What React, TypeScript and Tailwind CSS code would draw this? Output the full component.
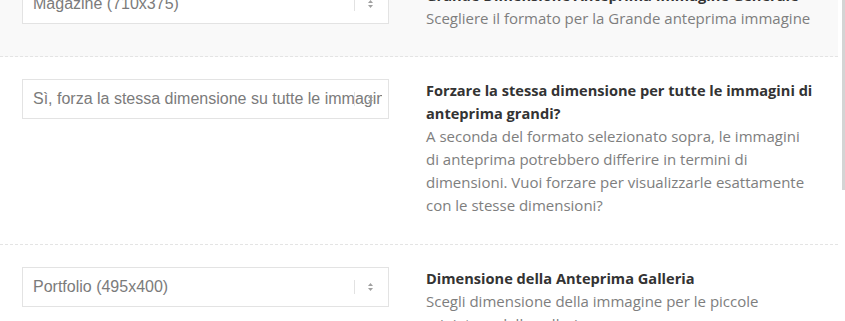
import React from "react";

type Row = {
  value: string;
  title: string[];
  desc: string[];
  shaded?: boolean;
};

const rows: Row[] = [
  {
    value: "Magazine (710x375)",
    title: ["Grande Dimensione Anteprima Immagine Generale"],
    desc: ["Scegliere il formato per la Grande anteprima immagine"],
    shaded: true,
  },
  {
    value: "Sì, forza la stessa dimensione su tutte le immagini di anteprima",
    title: ["Forzare la stessa dimensione per tutte le immagini di", "anteprima grandi?"],
    desc: [
      "A seconda del formato selezionato sopra, le immagini",
      "di anteprima potrebbero differire in termini di",
      "dimensioni. Vuoi forzare per visualizzarle esattamente",
      "con le stesse dimensioni?",
    ],
  },
  {
    value: "Portfolio (495x400)",
    title: ["Dimensione della Anteprima Galleria"],
    desc: ["Scegli dimensione della immagine per le piccole", "miniature della galleria"],
  },
];

function SelectBox({ value }: { value: string }) {
  return (
    <div className="relative h-[40px] w-[367px] border border-[#e3e3e3] bg-white">
      <div className="ml-[10px] mr-[6px] h-full overflow-hidden whitespace-nowrap text-[16px] leading-[38px] text-[#7b7b7b] [font-family:'Liberation_Sans',Arial,sans-serif]">
        {value}
      </div>
      {/* separator + up/down arrows sit over the text */}
      <div className="absolute right-[14px] top-0 flex h-full items-center gap-[12px]">
        <div className="h-[14px] w-px bg-[#e2e2e2]" />
        <svg width="7" height="10" viewBox="0 0 7 10" className="text-[#a0a0a0]">
          <path d="M3.5 1 L6 4 L1 4 Z" fill="currentColor" />
          <path d="M1 6 L6 6 L3.5 9 Z" fill="currentColor" />
        </svg>
      </div>
    </div>
  );
}

export default function App() {
  return (
    <div className="relative h-[321px] w-[845px] overflow-hidden bg-white">
      <div className="-mt-[38px] w-[838px]">
        {rows.map((row, i) => (
          <div
            key={i}
            className={`flex border-b border-dashed border-[#e4e4e4] pt-[22px] ${row.shaded ? "bg-[#f9f9f9] pb-[26px]" : "bg-white pb-[27px]"}`}
          >
            <div className="pl-[22px]">
              <SelectBox value={row.value} />
            </div>
            <div className="ml-[37px] w-[400px] leading-[23px] [font-family:'Open_Sans','Noto_Sans',sans-serif]">
              <div className="text-[14.6px] font-bold text-[#333333]">
                {row.title.map((t, j) => (
                  <div key={j} className="whitespace-nowrap">{t}</div>
                ))}
              </div>
              <div className="text-[15px] text-[#7e7e7e]">
                {row.desc.map((t, j) => (
                  <div key={j} className="whitespace-nowrap">{t}</div>
                ))}
              </div>
            </div>
          </div>
        ))}
      </div>
      {/* scrollbar thumb */}
      <div className="absolute right-0 top-0 h-[190px] w-[3px] bg-[#d4d4d4]" />
    </div>
  );
}
